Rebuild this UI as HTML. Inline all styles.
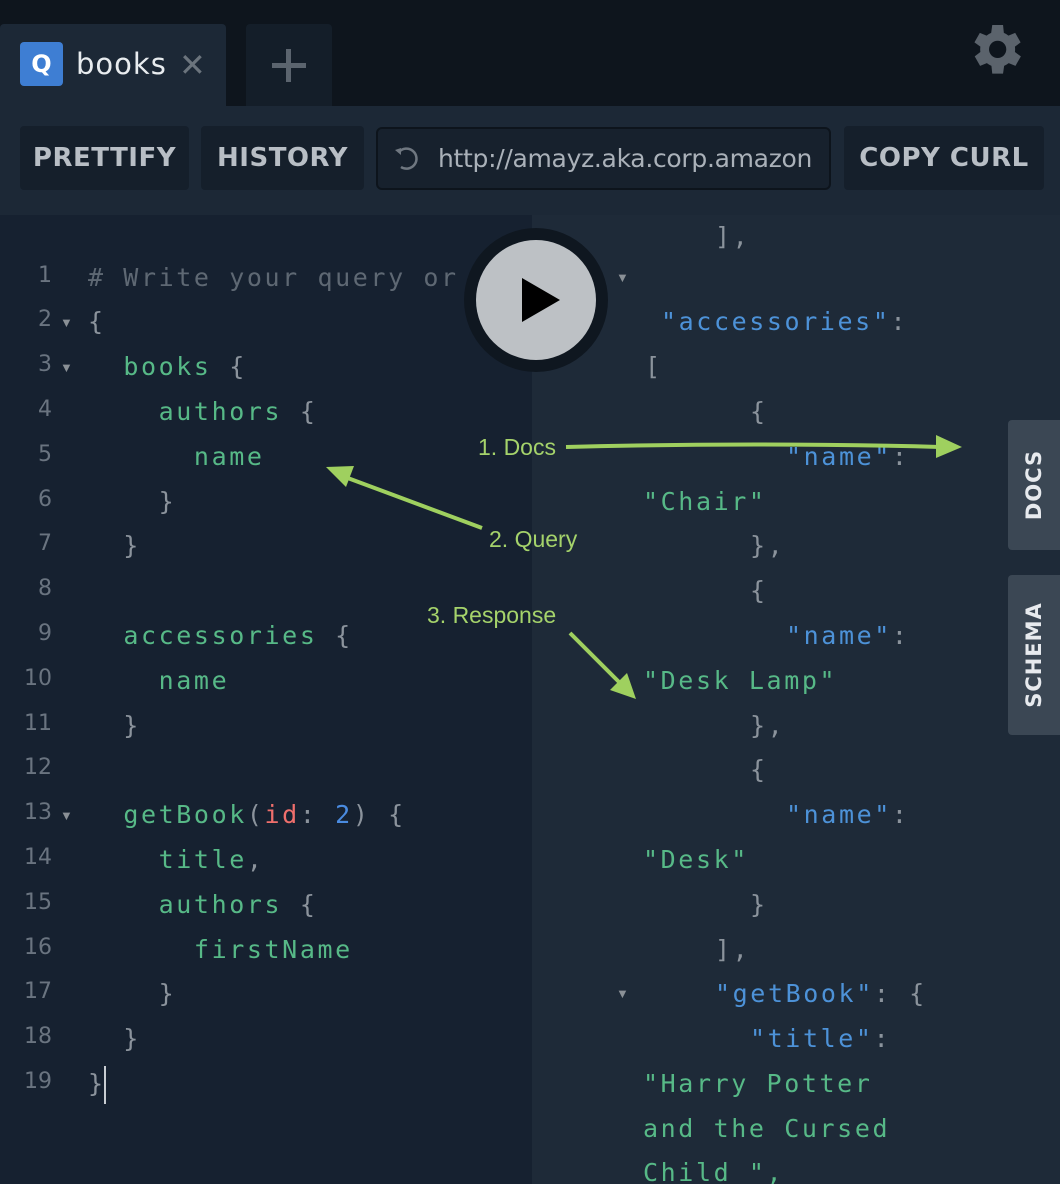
<!DOCTYPE html>
<html><head><meta charset="utf-8"><style>
*{margin:0;padding:0;box-sizing:border-box}
html,body{width:1060px;height:1184px;overflow:hidden}
body{background:#1e2a38;position:relative;font-family:"Liberation Sans",sans-serif}
.abs{position:absolute}
.top{left:0;top:0;width:1060px;height:106px;background:#0e151d}
.hdr{left:0;top:106px;width:1060px;height:109px;background:#1c2836}
.left{left:0;top:215px;width:532px;height:969px;background:#162130}
.btn{background:#151f2b;border-radius:4px;color:#b8bec5;font-family:"DejaVu Sans",sans-serif;font-size:26px;font-weight:bold;letter-spacing:0.5px;text-align:center;line-height:64px;height:64px;top:126px}
.code{font-family:"DejaVu Sans Mono","Liberation Mono",monospace;font-size:25px;letter-spacing:2.6px;white-space:pre;height:44.8px;line-height:44.8px}
.ln{font-family:"DejaVu Sans",sans-serif;font-size:22px;color:#6a7480;width:52px;text-align:right;height:44.8px;line-height:40px}
.g{color:#57b987}.p{color:#8b939c}.c{color:#5e6873}.r{color:#ef6f6c}.b{color:#4a8be0}.k{color:#4d92d8}
.tri{color:#8a9096;font-size:13px}
.ann{color:#a5d36b;font-size:23px;font-family:"Liberation Sans",sans-serif}
.side{background:#3b4754;border-radius:4px 0 0 4px;left:1008px;width:52px;color:#e7eaee;font-family:"DejaVu Sans",sans-serif;font-size:21px;font-weight:bold;letter-spacing:1px}
.side span{position:absolute;left:50%;top:50%;transform:translate(-50%,-50%) rotate(-90deg);white-space:nowrap}
</style></head><body>
<div class="abs top"></div>
<div class="abs hdr"></div>
<div class="abs left"></div>
<!-- tabs -->
<div class="abs" style="left:0;top:24px;width:226px;height:82px;background:#1c2836;border-radius:4px 4px 0 0"></div>
<div class="abs" style="left:20px;top:42px;width:43px;height:44px;background:#3e7ed3;border-radius:4px;color:#fff;font-weight:bold;font-size:24px;text-align:center;line-height:44px;font-family:'DejaVu Sans',sans-serif">Q</div>
<div class="abs" style="left:76px;top:47px;color:#e8ecef;font-size:29px;font-family:'DejaVu Sans',sans-serif;letter-spacing:1px">books</div>
<div class="abs" style="left:179px;top:46px;color:#6b747d;font-size:32px;font-family:'DejaVu Sans',sans-serif">✕</div>
<div class="abs" style="left:246px;top:24px;width:86px;height:82px;background:#141e29;border-radius:4px 4px 0 0"></div>
<div class="abs" style="left:272px;top:63px;width:34px;height:5px;background:#5b646e"></div>
<div class="abs" style="left:286px;top:49px;width:5px;height:33px;background:#5b646e"></div>
<svg class="abs" style="left:972px;top:21px" width="54" height="54" viewBox="2.5 1.5 20 20"><path fill="#5b636c" d="M19.4 13a7.5 7.5 0 0 0 0-2l2.1-1.6-2-3.5-2.5 1a7 7 0 0 0-1.7-1L15 3h-4l-.4 2.9a7 7 0 0 0-1.7 1l-2.5-1-2 3.5L6.6 11a7.5 7.5 0 0 0 0 2l-2.1 1.6 2 3.5 2.5-1a7 7 0 0 0 1.7 1L11 21h4l.4-2.9a7 7 0 0 0 1.7-1l2.5 1 2-3.5zM13 15.2a3.2 3.2 0 1 1 0-6.4 3.2 3.2 0 0 1 0 6.4z" transform="translate(-1 0)"/></svg>
<!-- toolbar -->
<div class="abs btn" style="left:20px;width:169px">PRETTIFY</div>
<div class="abs btn" style="left:201px;width:163px">HISTORY</div>
<div class="abs" style="left:376px;top:127px;width:455px;height:63px;background:#17212d;border:2px solid #0d141c;border-radius:6px"></div>
<svg class="abs" style="left:390px;top:143px" width="32" height="32" viewBox="0 0 32 32"><path d="M9 9 A10 10 0 1 1 11 24" fill="none" stroke="#6f7780" stroke-width="2.5"/><path d="M5 7 L11 5 L11 12 Z" fill="#6f7780"/></svg>
<div class="abs" style="left:438px;top:144px;color:#aab1b9;font-size:25px;font-family:'DejaVu Sans',sans-serif;white-space:nowrap;letter-spacing:-0.3px">http://amayz.aka.corp.amazon</div>
<div class="abs btn" style="left:844px;width:200px">COPY CURL</div>

<!-- left code -->
<div class="abs ln" style="left:0;top:256px">1</div>
<div class="abs ln" style="left:0;top:300px">2</div>
<div class="abs ln" style="left:0;top:345px">3</div>
<div class="abs ln" style="left:0;top:390px">4</div>
<div class="abs ln" style="left:0;top:435px">5</div>
<div class="abs ln" style="left:0;top:480px">6</div>
<div class="abs ln" style="left:0;top:524px">7</div>
<div class="abs ln" style="left:0;top:569px">8</div>
<div class="abs ln" style="left:0;top:614px">9</div>
<div class="abs ln" style="left:0;top:659px">10</div>
<div class="abs ln" style="left:0;top:704px">11</div>
<div class="abs ln" style="left:0;top:748px">12</div>
<div class="abs ln" style="left:0;top:793px">13</div>
<div class="abs ln" style="left:0;top:838px">14</div>
<div class="abs ln" style="left:0;top:883px">15</div>
<div class="abs ln" style="left:0;top:928px">16</div>
<div class="abs ln" style="left:0;top:972px">17</div>
<div class="abs ln" style="left:0;top:1017px">18</div>
<div class="abs ln" style="left:0;top:1062px">19</div>
<div class="abs tri" style="left:60px;top:315px">▼</div>
<div class="abs tri" style="left:60px;top:360px">▼</div>
<div class="abs tri" style="left:60px;top:808px">▼</div>

<div class="abs code c" style="left:88px;top:256px"># Write your query or</div>
<div class="abs code p" style="left:88px;top:300px">{</div>
<div class="abs code" style="left:88px;top:345px">  <span class="g">books</span> <span class="p">{</span></div>
<div class="abs code" style="left:88px;top:390px">    <span class="g">authors</span> <span class="p">{</span></div>
<div class="abs code" style="left:88px;top:435px">      <span class="g">name</span></div>
<div class="abs code p" style="left:88px;top:480px">    }</div>
<div class="abs code p" style="left:88px;top:524px">  }</div>
<div class="abs code" style="left:88px;top:614px">  <span class="g">accessories</span> <span class="p">{</span></div>
<div class="abs code" style="left:88px;top:659px">    <span class="g">name</span></div>
<div class="abs code p" style="left:88px;top:704px">  }</div>
<div class="abs code" style="left:88px;top:793px">  <span class="g">getBook</span><span class="p">(</span><span class="r">id</span><span class="p">: </span><span class="b">2</span><span class="p">) {</span></div>
<div class="abs code" style="left:88px;top:838px">    <span class="g">title</span><span class="p">,</span></div>
<div class="abs code" style="left:88px;top:883px">    <span class="g">authors</span> <span class="p">{</span></div>
<div class="abs code" style="left:88px;top:928px">      <span class="g">firstName</span></div>
<div class="abs code p" style="left:88px;top:972px">    }</div>
<div class="abs code p" style="left:88px;top:1017px">  }</div>
<div class="abs code p" style="left:88px;top:1062px">}</div>
<div class="abs" style="left:104px;top:1066px;width:2px;height:38px;background:#c8cdd2"></div>

<!-- right response -->
<div class="abs code p" style="left:715px;top:215px">],</div>
<div class="abs tri" style="left:616px;top:270px">▼</div>
<div class="abs code" style="left:661px;top:300px"><span class="k">"accessories"</span><span class="p">:</span></div>
<div class="abs code p" style="left:645px;top:345px">[</div>
<div class="abs code p" style="left:750px;top:390px">{</div>
<div class="abs code" style="left:786px;top:435px"><span class="k">"name"</span><span class="p">:</span></div>
<div class="abs code g" style="left:643px;top:480px">"Chair"</div>
<div class="abs code p" style="left:750px;top:524px">},</div>
<div class="abs code p" style="left:750px;top:569px">{</div>
<div class="abs code" style="left:786px;top:614px"><span class="k">"name"</span><span class="p">:</span></div>
<div class="abs code g" style="left:643px;top:659px">"Desk Lamp"</div>
<div class="abs code p" style="left:750px;top:704px">},</div>
<div class="abs code p" style="left:750px;top:748px">{</div>
<div class="abs code" style="left:786px;top:793px"><span class="k">"name"</span><span class="p">:</span></div>
<div class="abs code g" style="left:643px;top:838px">"Desk"</div>
<div class="abs code p" style="left:750px;top:883px">}</div>
<div class="abs code p" style="left:715px;top:928px">],</div>
<div class="abs tri" style="left:616px;top:986px">▼</div>
<div class="abs code" style="left:715px;top:972px"><span class="k">"getBook"</span><span class="p">: {</span></div>
<div class="abs code" style="left:750px;top:1017px"><span class="k">"title"</span><span class="p">:</span></div>
<div class="abs code g" style="left:643px;top:1062px">"Harry Potter</div>
<div class="abs code g" style="left:643px;top:1107px">and the Cursed</div>
<div class="abs code g" style="left:643px;top:1151px">Child ",</div>

<!-- play button -->
<div class="abs" style="left:464px;top:228px;width:144px;height:144px;border-radius:50%;background:#0f1720"></div>
<div class="abs" style="left:476px;top:240px;width:120px;height:120px;border-radius:50%;background:#bdc1c5"></div>
<svg class="abs" style="left:476px;top:240px" width="120" height="120"><path d="M46 38 L84 60 L46 82 Z" fill="#000"/></svg>

<!-- side tabs -->
<div class="abs side" style="top:420px;height:130px"><span>DOCS</span></div>
<div class="abs side" style="top:575px;height:160px"><span>SCHEMA</span></div>

<!-- annotations -->
<div class="abs ann" style="left:478px;top:434px">1. Docs</div>
<div class="abs ann" style="left:489px;top:526px">2. Query</div>
<div class="abs ann" style="left:427px;top:602px">3. Response</div>
<svg class="abs" style="left:0;top:0" width="1060" height="1184">
<g stroke="#9fd05f" stroke-width="4" fill="#9fd05f">
<path d="M566 447 Q760 442 940 447" fill="none"/>
<path d="M936 435 L962 447 L936 458 Z" stroke="none"/>
<path d="M482 528 L345 477" fill="none"/>
<path d="M326 467 L354 466 L346 487 Z" stroke="none"/>
<path d="M570 633 L622 685" fill="none"/>
<path d="M636 699 L610 690 L627 673 Z" stroke="none"/>
</g></svg>
</body></html>
